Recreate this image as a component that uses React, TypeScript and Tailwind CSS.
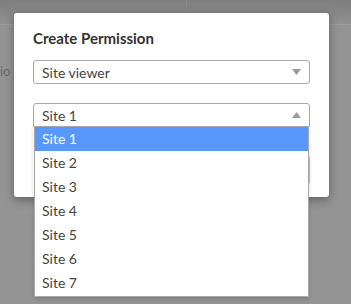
import React from 'react'

const SITES = ['Site 1', 'Site 2', 'Site 3', 'Site 4', 'Site 5', 'Site 6', 'Site 7']

function Caret({ up }: { up?: boolean }) {
  return (
    <svg width="9" height="6" viewBox="0 0 9 6" className="text-[#9a9a9a]" aria-hidden="true">
      {up ? <path d="M0 6 L4.5 0 L9 6 Z" fill="currentColor" /> : <path d="M0 0 L9 0 L4.5 6 Z" fill="currentColor" />}
    </svg>
  )
}

export default function App() {
  return (
    <div className="relative w-[351px] h-[304px] overflow-hidden bg-[#949494] font-['Lato',sans-serif]">
      {/* page behind the overlay */}
      <div className="h-[25px] bg-gradient-to-b from-[#7e7e7e] to-[#909090] border-b border-[#9d9d9d]" />
      <div className="absolute left-[186px] top-0 h-[25px] w-px bg-[#8a8a8a]" />
      <span className="absolute left-0 top-[62px] text-[13px] text-[#6a6a6a]">io</span>

      {/* modal */}
      <div className="absolute left-[14px] top-[13px] w-[315px] h-[184px] rounded-[3px] bg-white shadow-[0_3px_10px_rgba(0,0,0,0.35)] px-[19px] pt-[15px]">
        <h2 className="text-[15px] font-bold leading-[20px] text-[#333]">Create Permission</h2>

        <div className="mt-[12px] flex h-[24px] items-center justify-between rounded-[3px] border border-[#aaa] px-[8px] text-[14px] text-[#444]">
          <span>Site viewer</span>
          <Caret />
        </div>

        <div className="relative mt-[19px]">
          <div className="flex h-[24px] items-center justify-between rounded-t-[3px] border border-[#aaa] px-[8px] text-[14px] text-[#444]">
            <span>Site 1</span>
            <Caret up />
          </div>

          <div className="flex justify-end pt-[28px]">
            <div className="h-[30px] w-[70px] rounded-[3px] border border-[#9fd49f] bg-white" />
          </div>

          <ul className="absolute left-px right-px top-[24px] z-10 h-[170px] overflow-hidden border border-t-0 border-[#aaa] bg-white shadow-[0_2px_4px_rgba(0,0,0,0.15)]">
            {SITES.map((s, i) => (
              <li
                key={s}
                className={
                  i === 0
                    ? 'h-[24px] pl-[7px] text-[14px] leading-[24px] bg-[#5897fb] text-white'
                    : 'h-[24px] pl-[7px] text-[14px] leading-[24px] text-[#444]'
                }
              >
                {s}
              </li>
            ))}
          </ul>
        </div>
      </div>
    </div>
  )
}
